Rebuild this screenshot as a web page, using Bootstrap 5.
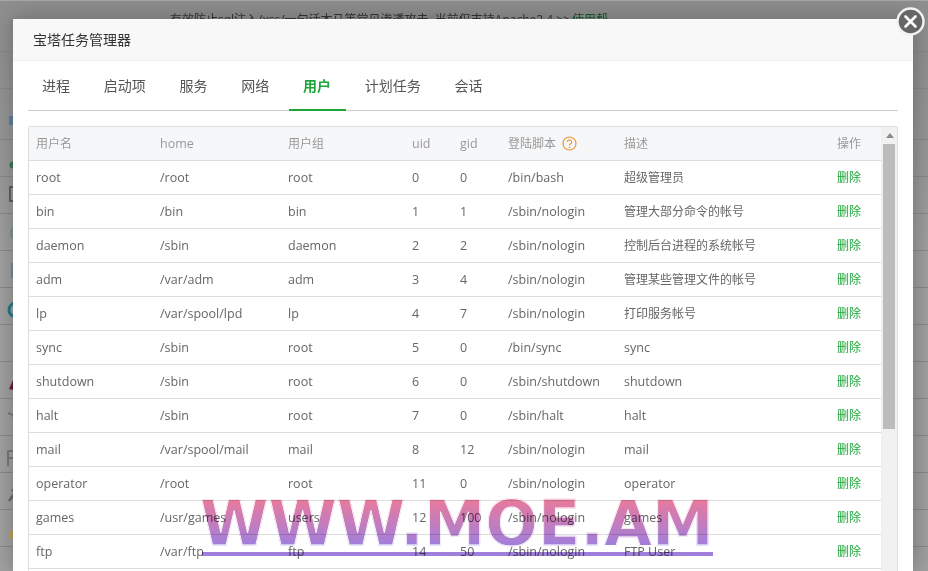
<!DOCTYPE html>
<html lang="zh">
<head>
    <meta charset="UTF-8">
    <title>宝塔任务管理器</title>
    <link href="https://cdn.jsdelivr.net/npm/bootstrap@5.3.0/dist/css/bootstrap.min.css" rel="stylesheet">
    <style>
        html, body {
            height: 571px;
            overflow: hidden;
        }
        body {
            font-family: "Open Sans", "Noto Sans CJK SC", sans-serif;
            font-size: 12.5px;
            color: #666;
            background-color: #a4a4a4;
        }
        .bt-zh { font-size: 12px; }
        .bt-backdrop {
            height: 571px;
            background: linear-gradient(#8e8e8e, #a2a2a2 45%, #a2a2a2);
            border-top: 1px solid #a8a8a8;
            position: relative;
        }
        .bt-bgrow {
            height: 37px;
            border-bottom: 1px solid #8b8b8b;
        }
        .bt-bgrow-top { height: 51px; }
        .bt-bgrow-tall { height: 51px; }
        .bt-notice {
            padding: 10px 0 0 170px;
            font-size: 12px;
            line-height: 18px;
            color: #333;
            white-space: nowrap;
        }
        .bt-notice span {
            color: #145c2a;
            margin-left: 2px;
        }
        .bt-strip {
            position: absolute;
            left: 0;
            top: 0;
        }
        .bt-layer {
            position: absolute;
            top: 18px;
            left: 13px;
            width: 900px;
            height: 553px;
            background-color: #fff;
            box-shadow: 1px 1px 24px rgba(0, 0, 0, .3);
        }
        .bt-layer-title {
            height: 42px;
            line-height: 42px;
            padding-left: 20px;
            font-size: 14px;
            color: #333;
            background-color: #f8f8f8;
            border-bottom: 1px solid #eee;
        }
        .bt-close {
            position: absolute;
            top: 6px;
            left: 896px;
            width: 29px;
            height: 29px;
        }
        .bt-tabs {
            margin: 0 15px;
            height: 50px;
            border-bottom: 1px solid #ccc;
        }
        .bt-tab {
            padding: 0 15px 0 14px;
            margin-right: 4.75px;
            height: 50px;
            line-height: 49px;
            font-size: 14px;
            color: #555;
        }
        .bt-tab-on {
            color: #20a53a;
            font-weight: 700;
            border-bottom: 2px solid #20a53a;
        }
        .bt-table-box {
            margin: 15px 15px 0;
            height: 470px;
            border: 1px solid #ddd;
            border-radius: 2px;
            overflow: hidden;
        }
        .bt-table-wrap { width: 852px; }
        .bt-table {
            table-layout: fixed;
            width: 852px;
            margin: 0;
            --bs-table-color: #666;
            font-size: 12.5px;
        }
        .bt-table th, .bt-table td {
            padding: 1px 7px 0;
            height: 34px;
            line-height: 32px;
            border-bottom: 1px solid #ddd;
            font-weight: 400;
            white-space: nowrap;
        }
        .bt-table th {
            padding-top: 0;
            height: 33px;
            color: #999;
            background-color: #f6f7f9;
        }
        .bt-table th:last-child, .bt-table td:last-child {
            text-align: right;
            padding-right: 20px;
        }
        .bt-table td.bt-del { color: #20a53a; }
        .bt-help {
            display: inline-block;
            width: 15px;
            height: 15px;
            margin-left: 6px;
            vertical-align: -3px;
        }
        .bt-scroll {
            width: 16px;
            background-color: #f1f1f1;
            border-left: 1px solid #eee;
        }
        .bt-scroll-up { height: 17px; }
        .bt-scroll-thumb {
            height: 285px;
            margin: 0 2px 0 1px;
            background-color: #bcbcbc;
        }
        .bt-mark {
            position: absolute;
            top: 487px;
            left: 200px;
            width: 513px;
            font-family: "DejaVu Sans", sans-serif;
            font-size: 62px;
            font-weight: 700;
            line-height: 72px;
            white-space: nowrap;
            text-align: center;
            background: linear-gradient(#e67a9e 18%, #a07fdc 80%);
            -webkit-background-clip: text;
            background-clip: text;
            color: transparent;
            -webkit-text-stroke: .8px #fff;
            mix-blend-mode: multiply;
        }
        .bt-mark-line {
            position: absolute;
            top: 551px;
            left: 202px;
            width: 511px;
            height: 4px;
            background-color: #a07fdc;
            mix-blend-mode: multiply;
        }
    </style>
</head>
<body>
    <div class="bt-backdrop">
        <div class="bt-bgrow bt-bgrow-top bt-notice">有效防止sql注入/xss/一句话木马等常见渗透攻击, 当前仅支持Apache2.4 &gt;&gt;<span>使用帮</span></div>
        <div class="bt-bgrow"></div>
        <div class="bt-bgrow bt-bgrow-tall"></div>
        <div class="bt-bgrow"></div>
        <div class="bt-bgrow"></div>
        <div class="bt-bgrow"></div>
        <div class="bt-bgrow"></div>
        <div class="bt-bgrow"></div>
        <div class="bt-bgrow"></div>
        <div class="bt-bgrow"></div>
        <div class="bt-bgrow"></div>
        <div class="bt-bgrow"></div>
        <div class="bt-bgrow"></div>
        <div class="bt-bgrow"></div>

        <!-- icons of the page behind, only their left edge shows -->
        <svg class="bt-strip" width="20" height="571" viewBox="0 0 20 571" fill="none">
            <circle cx="19" cy="24" r="8" stroke="#7f8f85" stroke-width="1.5"/>
            <circle cx="18" cy="68" r="7" stroke="#8f9a94" stroke-width="1.5"/>
            <rect x="9" y="115" width="8" height="9" fill="#5d84a5"/>
            <circle cx="13" cy="164" r="3.5" fill="#3e7a52"/>
            <rect x="10" y="186" width="8" height="14" stroke="#4f4f4f" stroke-width="1.5"/>
            <circle cx="18" cy="232" r="7" stroke="#6d9a78" stroke-width="1.5"/>
            <rect x="11" y="262" width="8" height="15" fill="#6f8fa3"/>
            <circle cx="16" cy="309" r="7" stroke="#1f7f8a" stroke-width="3"/>
            <path d="M13 343l6-6v12z" fill="#4b8a55"/>
            <path d="M9 388l4-9 4 2-4 8z" fill="#6b1f3a"/>
            <path d="M8 412l5 2 1 8" stroke="#747474" stroke-width="1.5"/>
            <path d="M8 465v-15h6M8 457h5" stroke="#6f6f6f" stroke-width="1.5"/>
            <path d="M9 500l6-8M12 490l3-3" stroke="#6a6a6a" stroke-width="2.5"/>
            <rect x="10" y="530" width="6" height="8" fill="#bfa65a"/>
        </svg>

        <div class="bt-layer">
            <div class="bt-layer-title">宝塔任务管理器</div>
            <div class="bt-tabs d-flex">
                <div class="bt-tab">进程</div>
                <div class="bt-tab">启动项</div>
                <div class="bt-tab">服务</div>
                <div class="bt-tab">网络</div>
                <div class="bt-tab bt-tab-on">用户</div>
                <div class="bt-tab">计划任务</div>
                <div class="bt-tab">会话</div>
            </div>
            <div class="bt-table-box d-flex">
                <div class="bt-table-wrap">
                    <table class="table bt-table">
                        <colgroup>
                            <col style="width:124px"><col style="width:128px"><col style="width:124px"><col style="width:48px"><col style="width:48px"><col style="width:116px"><col style="width:205px"><col style="width:59px">
                        </colgroup>
                        <thead>
                            <tr><th class="bt-zh">用户名</th><th>home</th><th class="bt-zh">用户组</th><th>uid</th><th>gid</th><th class="bt-zh">登陆脚本<svg class="bt-help" viewBox="0 0 15 15"><circle cx="7.5" cy="7.5" r="6.5" fill="none" stroke="#e8963a" stroke-width="1.2"/><path d="M5.4 6a2.1 2.1 0 1 1 3.2 1.8c-.7.4-1.1.8-1.1 1.6" fill="none" stroke="#e8963a" stroke-width="1.2"/><circle cx="7.5" cy="11.2" r=".8" fill="#e8963a"/></svg></th><th class="bt-zh">描述</th><th class="bt-zh">操作</th></tr>
                        </thead>
                        <tbody id="rows"></tbody>
                    </table>
                </div>
                <div class="bt-scroll">
                    <div class="bt-scroll-up d-flex justify-content-center align-items-center">
                        <svg width="8" height="5" viewBox="0 0 8 5"><path d="M4 0l4 5H0z" fill="#8a8a8a"/></svg>
                    </div>
                    <div class="bt-scroll-thumb"></div>
                </div>
            </div>
        </div>

        <svg class="bt-close" viewBox="0 0 29 29">
            <circle cx="14.5" cy="14.5" r="13" fill="#666" stroke="#f2f2f2" stroke-width="2.4"/>
            <path d="M9.5 9.5l10 10M19.5 9.5l-10 10" stroke="#fff" stroke-width="2.6" stroke-linecap="round"/>
        </svg>

        <div class="bt-mark">WWW.MOE.AM</div>
        <div class="bt-mark-line"></div>
    </div>
<script src="https://cdn.jsdelivr.net/npm/bootstrap@5.3.0/dist/js/bootstrap.bundle.min.js"></script>
<script>
    const users = [
        ["root", "/root", "root", 0, 0, "/bin/bash", "超级管理员"],
        ["bin", "/bin", "bin", 1, 1, "/sbin/nologin", "管理大部分命令的帐号"],
        ["daemon", "/sbin", "daemon", 2, 2, "/sbin/nologin", "控制后台进程的系统帐号"],
        ["adm", "/var/adm", "adm", 3, 4, "/sbin/nologin", "管理某些管理文件的帐号"],
        ["lp", "/var/spool/lpd", "lp", 4, 7, "/sbin/nologin", "打印服务帐号"],
        ["sync", "/sbin", "root", 5, 0, "/bin/sync", "sync"],
        ["shutdown", "/sbin", "root", 6, 0, "/sbin/shutdown", "shutdown"],
        ["halt", "/sbin", "root", 7, 0, "/sbin/halt", "halt"],
        ["mail", "/var/spool/mail", "mail", 8, 12, "/sbin/nologin", "mail"],
        ["operator", "/root", "root", 11, 0, "/sbin/nologin", "operator"],
        ["games", "/usr/games", "users", 12, 100, "/sbin/nologin", "games"],
        ["ftp", "/var/ftp", "ftp", 14, 50, "/sbin/nologin", "FTP User"]
    ];
    document.getElementById("rows").innerHTML = users.map(function (u) {
        return "<tr>" + u.map(function (c, i) {
            return i == 6 && /[^\x00-\x7f]/.test(c) ? '<td class="bt-zh">' + c + "</td>" : "<td>" + c + "</td>";
        }).join("") + '<td class="bt-del bt-zh">删除</td></tr>';
    }).join("");
</script>
</body>
</html>
